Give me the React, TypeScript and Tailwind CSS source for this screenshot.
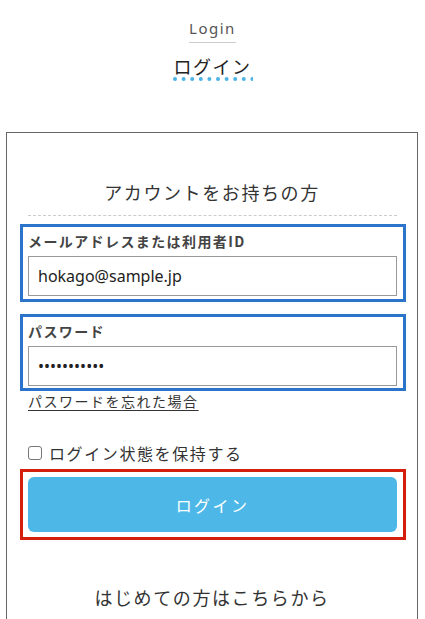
import React from "react";

export default function App() {
  return (
    <div className="w-[425px] h-[619px] bg-white font-['Noto_Sans','Noto_Sans_CJK_JP',sans-serif] text-[#333] overflow-hidden">
      <div className="flex flex-col items-center pt-[18px]">
        <div className="text-[15px] leading-[20px] tracking-[1.5px] text-[#555] font-['Noto_Sans',sans-serif]">Login</div>
        <div className="mt-[4px] h-px w-[47px] bg-[#ccc]" />
        <div className="mt-[12px] text-[18px] leading-[22px] tracking-[1.5px] text-[#222] font-['Noto_Sans_CJK_JP',sans-serif]">ログイン</div>
        <svg width="80" height="4" viewBox="0 0 80 4" className="block">
          {Array.from({ length: 10 }).map((_, i) => (
            <circle key={i} cx={2 + i * 8.6} cy={2} r={2} fill="#4cb4e6" />
          ))}
        </svg>
      </div>

      <div className="ml-[6px] mt-[51px] w-[412px] border border-[#666] pb-[40px] font-['Noto_Sans_CJK_JP',sans-serif]">
        <div className="pt-[46px] text-center text-[18px] leading-[26px] tracking-[1.6px] text-[#333]">
          アカウントをお持ちの方
        </div>
        <div className="ml-[21px] mt-[10px] w-[369px] border-t border-dashed border-[#ccc]" />

        <div className="ml-[13px] mt-[8px] w-[386px] border-[3px] border-[#2a75c9] px-[5px] pt-[4px] pb-[3px]">
          <div className="text-[14px] leading-[20px] font-bold tracking-[1.4px] text-[#444]">
            メールアドレスまたは利用者ID
          </div>
          <input
            readOnly
            value="hokago@sample.jp"
            className="mt-[5px] block h-[40px] w-[369px] border border-[#999] px-[9px] text-[16px] text-[#222] outline-none font-['Noto_Sans',sans-serif]"
          />
        </div>

        <div className="ml-[13px] mt-[12px] w-[386px] border-[3px] border-[#2a75c9] px-[5px] pt-[4px] pb-[2px]">
          <div className="text-[14px] leading-[20px] font-bold tracking-[1.4px] text-[#444]">
            パスワード
          </div>
          <input
            readOnly
            type="password"
            value="abcdefghijk"
            className="mt-[5px] block h-[40px] w-[369px] border border-[#999] px-[9px] text-[16px] text-[#222] outline-none font-['Noto_Sans',sans-serif]"
          />
        </div>

        <div className="ml-[21px] text-[14px] leading-[20px] tracking-[1.5px] text-[#333] underline underline-offset-[3px]">
          パスワードを忘れた場合
        </div>

        <div className="ml-[21px] mt-[30px] flex items-center h-[24px]">
          <span className="block h-[14px] w-[14px] rounded-[3px] border border-[#777] bg-white" />
          <span className="ml-[7px] text-[16px] leading-[24px] tracking-[1.6px] text-[#333]">
            ログイン状態を保持する
          </span>
        </div>

        <div className="ml-[13px] mt-[4px] w-[386px] border-[3px] border-[#d41e0e] p-[5px]">
          <div className="flex h-[55px] w-[369px] items-center justify-center rounded-[6px] bg-[#4db8e7] text-[16px] tracking-[2.4px] text-white">
            ログイン
          </div>
        </div>

        <div className="mt-[44px] text-center text-[18px] leading-[26px] tracking-[1.6px] text-[#333]">
          はじめての方はこちらから
        </div>
      </div>
    </div>
  );
}
